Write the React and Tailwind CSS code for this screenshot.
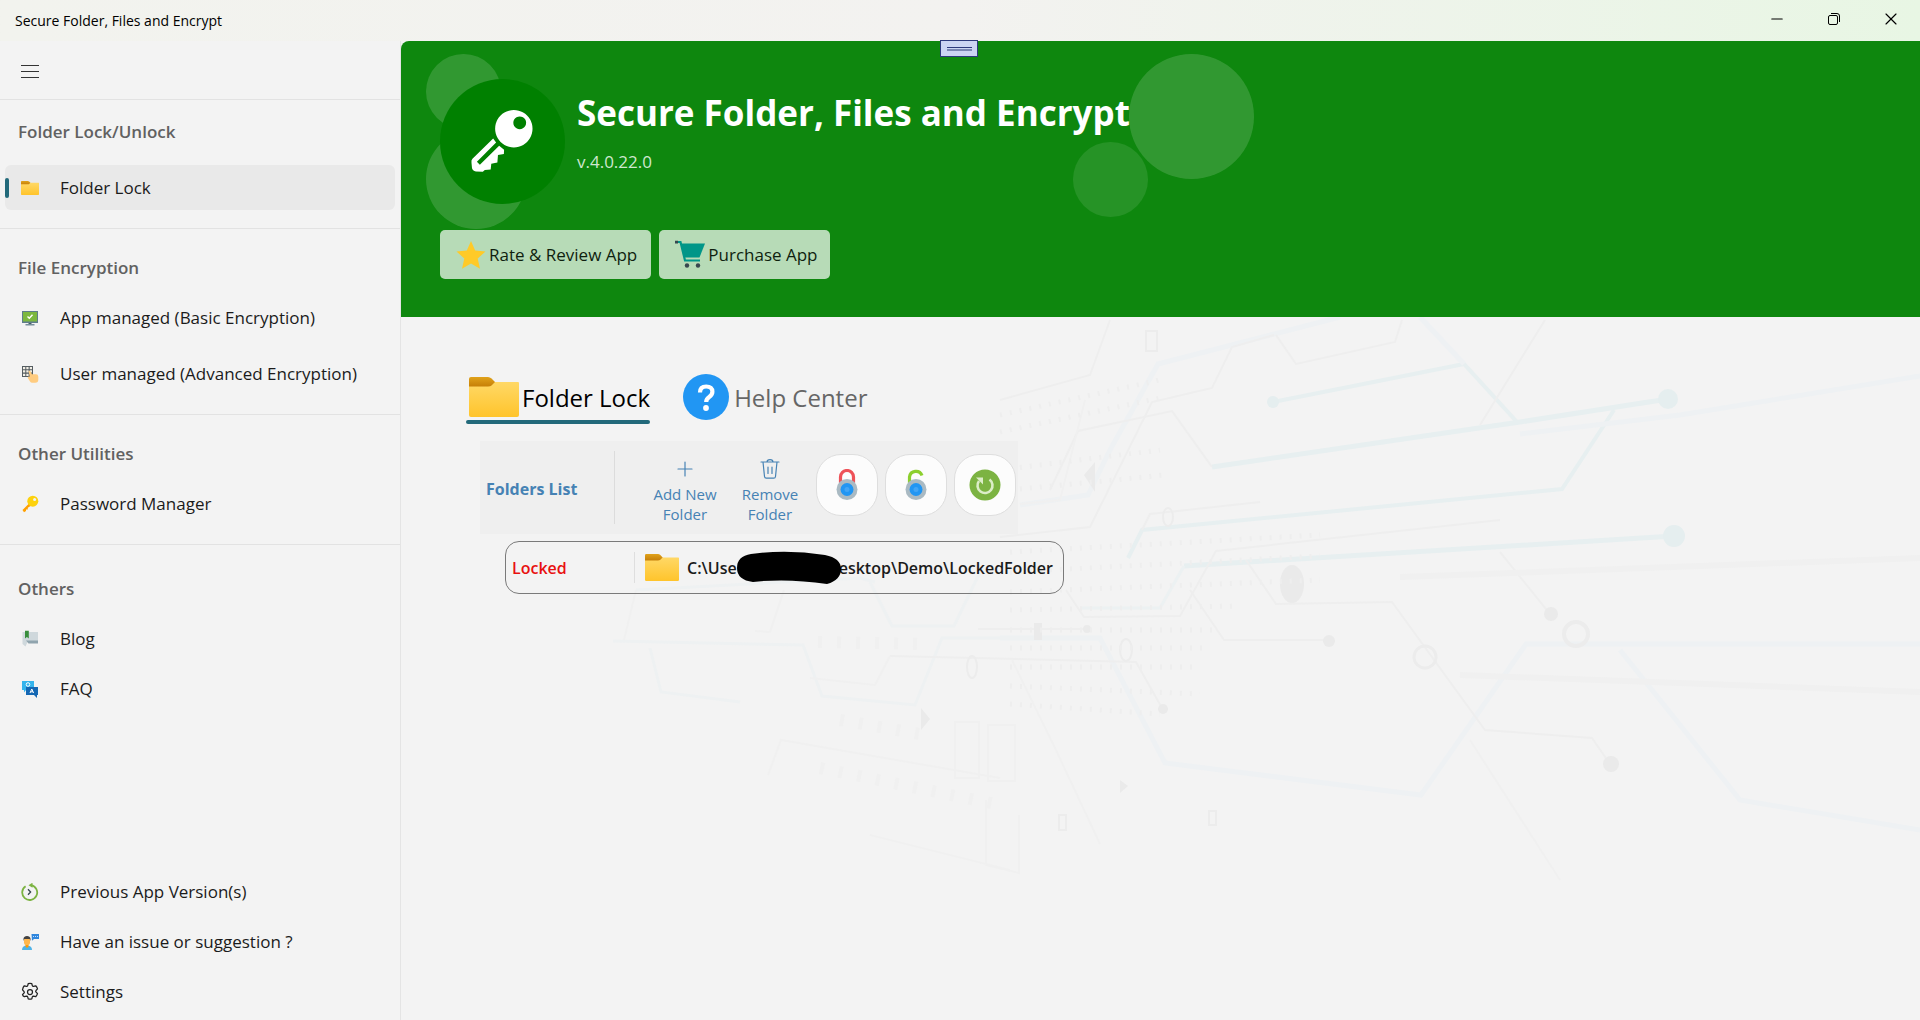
import { useState } from "react";
import { Minus, Plus, X } from "lucide-react";

function FolderIcon({ className }) {
  return (
    <svg viewBox="0 0 50 40" preserveAspectRatio="none" className={className}>
      <defs>
        <linearGradient id="folderFront" x1="0" y1="0" x2="0" y2="1">
          <stop offset="0" stopColor="#ffd866" />
          <stop offset="1" stopColor="#ffc42b" />
        </linearGradient>
        <linearGradient id="folderTab" x1="0" y1="0" x2="0" y2="1">
          <stop offset="0" stopColor="#e0a21a" />
          <stop offset="1" stopColor="#c67f08" />
        </linearGradient>
      </defs>
      <path d="M1 5h48a1 1 0 0 1 1 1v32a2 2 0 0 1-2 2H2a2 2 0 0 1-2-2V5z" fill="url(#folderFront)" />
      <path d="M2 0h17q2 0 3.500 1.500L26 5 22.500 8.500Q21.500 9.500 19 9.500H0V2Q0 0 2 0z" fill="url(#folderTab)" />
    </svg>
  );
}

function MonitorIcon({ className }) {
  return (
    <svg viewBox="0 0 18 18" className={className}>
      <rect x="1" y="2" width="16" height="12" fill="#5f7d8c" />
      <rect x="2" y="3" width="14" height="9.500" fill="#7cb83f" />
      <rect x="7.500" y="14" width="3" height="2" fill="#455a64" />
      <rect x="4.500" y="15" width="9" height="1.500" fill="#78909c" />
      <path d="M6.500 7.500 8.300 9.300 11.500 5.800" fill="none" stroke="#fff" strokeWidth="1.400" />
    </svg>
  );
}

function KeypadIcon({ className }) {
  return (
    <svg viewBox="0 0 18 18" className={className}>
      <rect x="1" y="1" width="11" height="11" fill="#555d61" />
      <g fill="#f2efe6">
        <path d="M2 2h2.300v2.300H2zM5.300 2h2.300v2.300H5.300zM8.700 2H11v2.300H8.700zM2 5.300h2.300v2.300H2zM5.300 5.300h2.300v2.300H5.300zM8.700 5.300H11v2.300H8.700zM2 8.700h2.300V11H2zM5.300 8.700h2.300V11H5.300z" />
      </g>
      <path d="M7.500 6q1.500-.8 2 .6L11 9.300h4q2.300 0 2.300 2.400v3q0 3-3 3h-3q-1.500 0-2.300-1.200L6.800 13q-.4-1.500 1-1.600l1 .4z" fill="#ffcc80" />
    </svg>
  );
}

function YellowKeyIcon({ className }) {
  return (
    <svg viewBox="0 0 18 18" className={className}>
      <path d="M8 8.500 1.500 15 3 17.200 5 16v-1.600h1.800v-1.600L10 10.800z" fill="#ffa000" />
      <circle cx="11.800" cy="6.200" r="5.500" fill="#fdd20d" />
      <circle cx="13.600" cy="4.400" r="1.500" fill="#f3f3f3" />
    </svg>
  );
}

function BlogIcon({ className }) {
  return (
    <svg viewBox="0 0 18 18" className={className}>
      <path d="M1.500 2H17v10H6.500L4.500 16.500 1.500 14z" fill="#cfd8dc" />
      <path d="M5 10.500h12v3H7.500z" fill="#90a4ae" />
      <path d="M4 .8h3.800V8.500L5.900 7 4 8.500z" fill="#388e3c" />
    </svg>
  );
}

function FaqIcon({ className }) {
  return (
    <svg viewBox="0 0 18 18" className={className}>
      <path d="M1 1h12v9H5L3 12.500V10H1z" fill="#35b4ec" />
      <path d="M5 7h12v8h-1v3l-3-3H5z" fill="#1467b3" />
      <circle cx="7" cy="4.500" r="1.800" fill="none" stroke="#fff" strokeWidth="1" />
      <path d="M9 13l1.800-4 1.800 4M9.600 11.800h2.400" fill="none" stroke="#fff" strokeWidth="1" />
    </svg>
  );
}

function HistoryIcon({ className }) {
  return (
    <svg viewBox="0 0 18 18" className={className}>
      <path d="M4.600 3.200A7.500 7.500 0 1 0 10 2.100" fill="none" stroke="#7cb342" strokeWidth="1.800" />
      <path d="M7.500 2.200 11.500-.3v5z" fill="#7cb342" />
      <path d="M7 6.300 9.600 9 7 11.700" fill="none" stroke="#37474f" strokeWidth="1.300" />
    </svg>
  );
}

function SupportIcon({ className }) {
  return (
    <svg viewBox="0 0 18 18" className={className}>
      <path d="M1 17q0-4.500 5-4.500T11 17z" fill="#4fb3e8" />
      <path d="M4.500 11h3v2.500L6 15l-1.500-1.500z" fill="#ff9800" />
      <rect x="3" y="4.500" width="6" height="7.500" rx="2.500" fill="#ffb74d" />
      <path d="M2.500 8V5.500Q3 3 6 3t3.500 2.500V8L8.600 6H3.400z" fill="#424242" />
      <path d="M10.500 1h7.500v5h-5l-2 1.800z" fill="#2f86dd" />
      <path d="M12 3.500h1M14 3.500h1M16 3.500h1" stroke="#bfe0ff" strokeWidth="1" />
    </svg>
  );
}

function GearIcon({ className }) {
  return (
    <svg viewBox="0 0 20 20" className={className} fill="none" stroke="#222" strokeWidth="1.250">
      <path
        strokeLinejoin="round"
        d="M8.200 1.600q1.800-.4 3.600 0l.5 2q.3.900 1.200.8l2.200-.6q1.300 1.400 1.800 3.100l-1.500 1.600q-.7.700 0 1.500l1.500 1.600q-.5 1.700-1.800 3.100l-2.200-.6q-.9-.1-1.200.8l-.5 2q-1.800.4-3.600 0l-.5-2q-.3-.9-1.200-.8l-2.200.6Q3 14.300 2.500 12.600L4 11q.7-.8 0-1.500L2.500 7.900Q3 5.200 4.300 3.800l2.200.6q.9.100 1.200-.8z"
      />
      <circle cx="10" cy="10" r="2.500" />
    </svg>
  );
}

function HeroKey({ className }) {
  return (
    <svg viewBox="0 0 64 64" className={className}>
      <path d="M22.500 29 1.500 49.500Q0 51 .5 53.500L1 59q.5 3 4 3.500l7 .2 2-1.700 6-.6.600-5.800 6.200-1.200.6-7.600 6-1 .2-4.500-5-4L9 55.500 6 52.500 25.500 33z" fill="#fff" />
      <path
        fillRule="evenodd"
        d="M43.500 0a19 19 0 1 0 .01 0zM49.500 6.500a6.500 6.500 0 1 1-.01 0z"
        fill="#fff"
      />
    </svg>
  );
}

function StarIcon({ className }) {
  return (
    <svg viewBox="0 0 30 30" className={className}>
      <path d="M15 1l4.200 9.600L29.500 11.500l-7.800 7 2.300 10.300L15 23.500l-9 5.300 2.300-10.300-7.800-7 10.300-.9z" fill="#ffca28" />
    </svg>
  );
}

function CartIcon({ className }) {
  return (
    <svg viewBox="0 0 30 30" className={className}>
      <path d="M1.500 2h4l4.500 18.500h15" fill="none" stroke="#009688" strokeWidth="2.200" />
      <path d="M0 .8h3v2.600H0z" fill="#37474f" />
      <path d="M5.500 3.500H30L24.500 17.500H9.500z" fill="#009688" />
      <circle cx="12" cy="25.500" r="2.200" fill="#37474f" />
      <circle cx="23" cy="25.500" r="2.200" fill="#37474f" />
    </svg>
  );
}

function HelpIcon({ className }) {
  return (
    <svg viewBox="0 0 46 46" className={className}>
      <circle cx="23" cy="23" r="23" fill="#2196f3" />
      <path
        d="M17 18.500q0-6 6.200-6t6.200 5.200q0 3-3.200 5.200-3 2-3 5"
        fill="none"
        stroke="#fff"
        strokeWidth="4.200"
      />
      <circle cx="23" cy="34" r="2.900" fill="#fff" />
    </svg>
  );
}

function TrashIcon({ className }) {
  return (
    <svg viewBox="0 0 20 20" className={className} fill="none" stroke="currentColor" strokeWidth="1.200" strokeLinecap="round">
      <path d="M1 3h18M7 3q0-2.400 3-2.400T13 3M3 3l1.500 14.500q.2 1.700 1.800 1.700h7.400q1.600 0 1.800-1.700L17 3M8 8v6.500M12 8v6.500" />
    </svg>
  );
}

function PadlockIcon({ open, className }) {
  return (
    <svg viewBox="0 0 22 32" className={className}>
      {open ? (
        <path d="M4.500 14V8a6.500 6.500 0 0 1 12.500-1.500" fill="none" stroke="#8ccf2e" strokeWidth="3.200" />
      ) : (
        <path d="M4.500 14V8a6.500 6.500 0 0 1 13 0v6" fill="none" stroke="#ee5258" strokeWidth="3.200" />
      )}
      <circle cx="11" cy="20.500" r="10.500" fill="#aabac3" />
      <circle cx="11" cy="20.500" r="6.500" fill="#2196f3" />
      <circle cx="11" cy="20.500" r="2.500" fill="#42a5f5" />
    </svg>
  );
}

function RefreshIcon({ className }) {
  return (
    <svg viewBox="0 0 32 32" className={className}>
      <circle cx="16" cy="16" r="15.500" fill="#7cb342" />
      <path d="M20.500 10.500A7.500 7.500 0 1 1 10 12" fill="none" stroke="#dcedc8" strokeWidth="2.600" />
      <path d="M7 8.500h7v7z" fill="#dcedc8" />
    </svg>
  );
}

// Faint circuit artwork behind the content area
function CircuitBackdrop() {
  return (
    <svg
      viewBox="401 317 1519 703"
      preserveAspectRatio="xMinYMin slice"
      className="pointer-events-none absolute inset-0 h-full w-full"
      fill="none"
      aria-hidden="true"
    >
      <g stroke="#e7eff0" strokeWidth="4">
        <path d="M1273 402 1464 364 1517 422" />
        <path d="M1212 467 1520 422 1668 399" strokeWidth="5" />
        <path d="M1614 410 1562 489 1142 530 1128 558" />
        <path d="M1674 536 1184 566" strokeWidth="5" />
      </g>
      <path d="M1184 566 1160 608 1080 608" stroke="#ecf1f2" strokeWidth="3" />
      <g fill="#e5eeef">
        <circle cx="1273" cy="402" r="6" />
        <circle cx="1668" cy="399" r="10" />
        <circle cx="1674" cy="536" r="11" />
      </g>
      <g stroke="#eef1f3" strokeWidth="5">
        <path d="M1340 317 1158 364 1110 450 1088 495 1020 505" />
        <path d="M1420 317 1464 364" />
        <path d="M1920 376 1680 415 1520 434" />
        <path d="M1000 638h100l65 125 256 32 105-151h394" />
        <path d="M1620 650 1740 800 1920 830" />
      </g>
      <g stroke="#eef1f2" strokeWidth="3">
        <path d="M636 590 860 578 875 582" />
        <path d="M613 641 803 645 822 696 915 705 942 638 1060 638" />
        <path d="M650 648 661 692 740 702" />
        <path d="M870 582 892 626h62l26-54" />
      </g>
      <g stroke="#eeeeee" strokeWidth="2">
        <path d="M1110 320 1090 375 1000 400" />
        <path d="M1276 335 1296 364 1395 342 1402 320" />
        <path d="M1545 320 1480 425" />
        <path d="M1274 335 1232 347 1212 388 1152 402 1090 527 1000 537" />
        <path d="M1050 490 1078 431 1172 411 1212 467" />
        <path d="M1142 530 1150 514 1260 502" />
        <path d="M1066 590 1084 617 1180 616 1216 551 1500 520" />
        <path d="M1190 590 1224 640h105" />
        <path d="M1246 560 1276 604 1392 602 1485 730 1592 738 1610 764" />
        <path d="M1500 552 1550 614" />
        <path d="M978 629h109M890 656 1136 662 1162 708" />
      </g>
      <g stroke="#f0f0f0" strokeWidth="2">
        <path d="M810 678 875 685 890 656M768 775 781 740 1000 778" />
        <path d="M1012 660 1055 748 1100 844M1470 740 1560 880" />
        <path d="M1085 400 1060 500 1020 504" />
        <path d="M955 722h24v56h-24zM988 725h27v56h-27z" />
        <path d="M986 800v65l33 8v-58M870 835l60 15 80 20" />
        <path d="M636 590 624 640M784 590 770 632 755 631" />
      </g>
      <g stroke="#f0f0f0" strokeWidth="6">
        <path d="M1400 577 1920 558M1460 675 1920 692" />
      </g>
      <g stroke="#ececec" strokeWidth="2">
        <rect x="1146" y="331" width="11" height="20" />
        <circle cx="1576" cy="634" r="12" strokeWidth="4" />
        <circle cx="1425" cy="657" r="11" strokeWidth="3" />
        <ellipse cx="1168" cy="517" rx="5" ry="9" />
        <ellipse cx="1126" cy="650" rx="6" ry="11" />
        <ellipse cx="972" cy="667" rx="5" ry="11" />
        <rect x="1059" y="815" width="7" height="15" />
        <rect x="1209" y="811" width="7" height="14" />
      </g>
      <g fill="#eaeaea">
        <ellipse cx="1292" cy="584" rx="12" ry="19" />
        <path d="M1084 475 1095 462v30z" />
        <rect x="1034" y="623" width="8" height="17" />
        <circle cx="1087" cy="629" r="4" />
        <circle cx="1163" cy="709" r="5" />
        <circle cx="1551" cy="614" r="7" />
        <circle cx="1611" cy="764" r="8" />
        <circle cx="1329" cy="641" r="6" />
        <path d="M921 708 930 719 921 730z" />
        <path d="M1120 780 1128 786 1120 793z" />
      </g>
      {/* pad rows */}
      <g stroke="#eeeeee" strokeWidth="5" strokeDasharray="2 8">
        <path d="M1000 415 1160 380M1000 432 1160 398M1000 470 1160 450M1010 490 1165 475" />
        <path d="M1010 552 1320 535M1010 572 1320 556M1010 592 1320 580M1010 610 1240 606" />
        <path d="M1010 630h210M1010 648h200M1010 667h190M1010 686l190 8M1010 704l150 10" />
      </g>
      <g stroke="#f0f0f0" strokeWidth="12" strokeDasharray="4 15">
        <path d="M818 642 930 644M820 768l185 38M840 720l80 14" />
      </g>
    </svg>
  );
}

function NavItem({ icon, label, selected, onClick, className = "" }) {
  return (
    <button
      type="button"
      onClick={onClick}
      className={`flex h-[45px] w-full items-center rounded-md ${selected ? "bg-[#e9e9e9]" : ""} ${className}`}
    >
      <span className={`h-5 w-1 rounded-full ${selected ? "bg-[#22697a]" : ""}`} />
      <span className="ml-3 flex w-[18px] items-center justify-center">{icon}</span>
      <span className="ml-[21px] pt-px">{label}</span>
    </button>
  );
}

function NavHeader({ children }) {
  return <h2 className="flex h-[50px] items-center px-[13px] font-semibold text-[#616161]">{children}</h2>;
}

function Sidebar() {
  const [selected, setSelected] = useState("Folder Lock");
  const item = (label, icon, className) => (
    <NavItem
      icon={icon}
      label={label}
      className={className}
      selected={selected === label}
      onClick={() => setSelected(label)}
    />
  );

  return (
    <nav className="flex w-[401px] shrink-0 flex-col border-r border-[#e4e4e4] text-[17px] leading-6 text-[#1b1b1b]">
      <div className="flex h-[59px] items-center border-b border-[#e2e2e2] px-5">
        <button type="button" aria-label="Toggle navigation" className="flex w-[20px] flex-col gap-[5px] px-px pt-[3px]">
          <span className="h-px w-full bg-[#333]" />
          <span className="h-px w-full bg-[#333]" />
          <span className="h-px w-full bg-[#333]" />
        </button>
      </div>

      <section className="border-b border-[#e2e2e2] px-[5px] pt-[7px] pb-[18px]">
        <NavHeader>Folder Lock/Unlock</NavHeader>
        {item("Folder Lock", <FolderIcon className="h-[14px] w-[18px]" />, "mt-2")}
      </section>

      <section className="border-b border-[#e2e2e2] px-[5px] pt-[14px] pb-[18px]">
        <NavHeader>File Encryption</NavHeader>
        {item("App managed (Basic Encryption)", <MonitorIcon className="h-[18px] w-[18px]" />, "mt-[2px]")}
        {item("User managed (Advanced Encryption)", <KeypadIcon className="h-[18px] w-[18px]" />, "mt-[11px]")}
      </section>

      <section className="border-b border-[#e2e2e2] px-[5px] pt-[14px] pb-[18px]">
        <NavHeader>Other Utilities</NavHeader>
        {item("Password Manager", <YellowKeyIcon className="h-[18px] w-[18px]" />, "mt-[2px]")}
      </section>

      <section className="px-[5px] pt-[19px]">
        <NavHeader>Others</NavHeader>
        {item("Blog", <BlogIcon className="h-[18px] w-[18px]" />, "mt-[2px]")}
        {item("FAQ", <FaqIcon className="h-[18px] w-[18px]" />, "mt-[5px]")}
      </section>

      <section className="mt-auto flex flex-col gap-[5px] px-[5px] pb-[6px]">
        {item("Previous App Version(s)", <HistoryIcon className="h-[18px] w-[18px]" />)}
        {item("Have an issue or suggestion ?", <SupportIcon className="h-[18px] w-[18px]" />)}
        {item("Settings", <GearIcon className="h-5 w-5 shrink-0" />)}
      </section>
    </nav>
  );
}

function Hero() {
  return (
    <header className="relative overflow-hidden rounded-tl-lg bg-[#0e870e] pt-[38px] pb-[38px] pl-[39px]">
      <div className="absolute top-[13px] left-[25px] h-[75px] w-[75px] rounded-full bg-white/15" />
      <div className="absolute top-[88px] left-[25px] h-[100px] w-[100px] rounded-full bg-white/15" />
      <div className="absolute top-[13px] left-[728px] h-[125px] w-[125px] rounded-full bg-white/15" />
      <div className="absolute top-[101px] left-[672px] h-[75px] w-[75px] rounded-full bg-white/10" />

      <div className="relative flex">
        <div className="flex h-[125px] w-[125px] items-center justify-center rounded-full bg-[#008000]">
          <HeroKey className="h-[63px] w-[63px]" />
        </div>
        <div className="ml-3 pt-[9px]">
          <h1 className="text-[35px] leading-[50px] font-bold text-white">Secure Folder, Files and Encrypt</h1>
          <p className="mt-3 text-[17px] leading-6 text-[#cfe7cf]">v.4.0.22.0</p>
        </div>
      </div>

      <div className="relative mt-[26px] flex gap-2 text-[17px] text-[#0f1f0f]">
        <button type="button" className="flex h-[49px] items-center rounded-[5px] bg-[#b7dbb7] pr-[14px] pl-4">
          <StarIcon className="h-[30px] w-[30px]" />
          <span className="ml-[3px]">Rate &amp; Review App</span>
        </button>
        <button type="button" className="flex h-[49px] items-center rounded-[5px] bg-[#b7dbb7] pr-3 pl-4">
          <CartIcon className="h-[30px] w-[30px]" />
          <span className="ml-[3px]">Purchase App</span>
        </button>
      </div>
    </header>
  );
}

function RoundButton({ label, children }) {
  return (
    <button
      type="button"
      aria-label={label}
      className="flex h-[62px] w-[62px] items-center justify-center rounded-[25px] border border-[#dedede] bg-[#fcfcfc]"
    >
      {children}
    </button>
  );
}

function Toolbar() {
  return (
    <div className="ml-[79px] flex h-[93px] w-[538px] items-center bg-[#efefef] pl-[6px] text-[#4682b4]">
      <h3 className="w-[128px] pt-[2px] text-[16px] font-bold">Folders List</h3>
      <div className="h-[73px] w-px bg-[#dcdcdc]" />
      <button type="button" className="ml-[35px] flex w-[70px] flex-col items-center pt-[6px] text-[15px] leading-5">
        <Plus className="mb-[3px] h-6 w-6" strokeWidth={1.2} />
        Add New
        <br />
        Folder
      </button>
      <button type="button" className="ml-[15px] flex w-[70px] flex-col items-center pt-[6px] text-[15px] leading-5">
        <TrashIcon className="mt-[2px] mb-[5px] h-5 w-5" />
        Remove
        <br />
        Folder
      </button>
      <div className="mb-[5px] ml-[11px] flex gap-[7px]">
        <RoundButton label="Lock">
          <PadlockIcon className="h-8 w-[22px]" />
        </RoundButton>
        <RoundButton label="Unlock">
          <PadlockIcon open className="h-8 w-[22px]" />
        </RoundButton>
        <RoundButton label="Refresh">
          <RefreshIcon className="h-8 w-8" />
        </RoundButton>
      </div>
    </div>
  );
}

function LockedRow() {
  return (
    <div className="mt-[7px] ml-[104px] flex h-[53px] w-[559px] items-center rounded-[14px] border border-[#7a7a7a] pl-[6px] text-[16px] font-semibold">
      <span className="w-[122px] shrink-0 pt-px text-[#e81010]">Locked</span>
      <div className="h-[31px] w-px shrink-0 bg-[#dedede]" />
      <FolderIcon className="ml-[10px] h-[27px] w-[34px] shrink-0" />
      <span className="ml-2 pt-px text-[#1b1b1b]">C:\Use</span>
      <svg viewBox="0 0 104 33" className="relative -mr-[2px] h-[33px] w-[104px] shrink-0">
        <path d="M14 3Q50-2 88 4 104 7 104 18T90 33Q50 27 16 31 0 29 0 17T14 3z" />
      </svg>
      <span className="pt-px text-[#1b1b1b]">esktop\Demo\LockedFolder</span>
    </div>
  );
}

function App() {
  return (
    <div className="flex min-h-screen flex-col bg-[#f3f3f3] font-['Open_Sans','Noto_Sans',sans-serif]">
      <div className="flex h-[41px] items-center justify-between bg-linear-to-r from-[#f2f3ee] via-[#f3f2f0] to-[#e8f6e4] pl-[15px] text-black">
        <span className="text-sm">Secure Folder, Files and Encrypt</span>
        <div className="flex pr-[1px] pb-[3px]">
          <button type="button" aria-label="Minimize" className="flex h-8 w-[57px] items-center justify-center">
            <Minus className="h-[18px] w-[18px]" strokeWidth={1.4} />
          </button>
          <button type="button" aria-label="Restore" className="flex h-8 w-[57px] items-center justify-center">
            <svg viewBox="0 0 12 12" className="h-3 w-3" fill="none" stroke="currentColor">
              <rect x="0.500" y="2.500" width="9" height="9" rx="1.500" />
              <path d="M3 .5h6Q11.500.5 11.500 3v6" />
            </svg>
          </button>
          <button type="button" aria-label="Close" className="flex h-8 w-[57px] items-center justify-center">
            <X className="h-5 w-5" strokeWidth={1.4} />
          </button>
        </div>
      </div>

      <div className="relative flex grow">
        <Sidebar />
        <main className="flex min-w-0 grow flex-col">
          <Hero />
          <div className="relative grow">
            <CircuitBackdrop />
            <div className="relative pt-[56px]">
              <div role="tablist" className="mb-[17px] ml-[65px] flex text-[24px] leading-8">
                <button type="button" role="tab" aria-selected="true" className="flex flex-col text-black">
                  <span className="flex h-[47px] items-center pl-[3px]">
                    <FolderIcon className="h-10 w-[50px]" />
                    <span className="ml-[3px] pt-[2px]">Folder Lock</span>
                  </span>
                  <span className="h-1 w-full rounded-full bg-[#22697a]" />
                </button>
                <button type="button" role="tab" aria-selected="false" className="ml-[33px] flex h-[47px] items-center text-[#666]">
                  <HelpIcon className="h-[46px] w-[46px]" />
                  <span className="ml-[5px] pt-[2px]">Help Center</span>
                </button>
              </div>
              <Toolbar />
              <LockedRow />
            </div>
          </div>
        </main>

        {/* Drag handle over the page's top edge */}
        <div className="absolute -top-px left-1/2 -ml-5 flex h-[17px] w-[38px] flex-col items-center justify-center gap-px border border-[#2d3a7c] bg-[#ccd5f3]">
          <span className="h-px w-[25px] bg-[#2d3a7c]" />
          <span className="h-0.5 w-[25px] bg-[#7c88b4]" />
        </div>
      </div>
    </div>
  );
}

export default App;
